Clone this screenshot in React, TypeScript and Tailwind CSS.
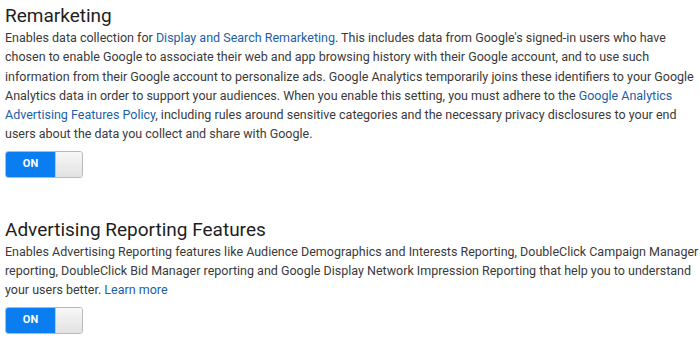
export default function App() {
  return (
    <div className="min-h-screen bg-white pl-[5px] pt-[3px] font-['Roboto',sans-serif] text-[#3a3a3a]">
      <Section
        title="Remarketing"
        body={
          <>
            Enables data collection for <A>Display and Search Remarketing</A>. This includes data from
            Google&apos;s signed-in users who have chosen to enable Google to associate their web and app
            browsing history with their Google account, and to use such information from their Google
            account to personalize ads. Google Analytics temporarily joins these identifiers to your Google
            Analytics data in order to support your audiences. When you enable this setting, you must adhere
            to the <A>Google Analytics Advertising Features Policy</A>, including rules around sensitive
            categories and the necessary privacy disclosures to your end users about the data you collect and
            share with Google.
          </>
        }
      />
      <div className="h-[39px]" />
      <Section
        title="Advertising Reporting Features"
        body={
          <>
            Enables Advertising Reporting features like Audience Demographics and Interests Reporting,
            DoubleClick Campaign Manager reporting, DoubleClick Bid Manager reporting and Google Display
            Network Impression Reporting that help you to understand your users better. <A>Learn more</A>
          </>
        }
      />
    </div>
  );
}

function A({ children }: { children: React.ReactNode }) {
  return (
    <a href="#" className="text-[#1a5fa6]">
      {children}
    </a>
  );
}

function Section({ title, body }: { title: string; body: React.ReactNode }) {
  return (
    <section>
      <h2 className="text-[19px] leading-[25px] text-[#1e1e1e]">{title}</h2>
      <p className="text-[12.5px] leading-[19.3px]">{body}</p>
      <Toggle />
    </section>
  );
}

function Toggle() {
  return (
    <div className="mt-[7px] flex h-[27px] w-[78px] overflow-hidden rounded-[3px] border border-[#b9b9b9]">
      <div className="flex w-[49px] items-center justify-center bg-[#0a7ef0] text-[11px] font-bold text-white">
        ON
      </div>
      <div className="flex-1 border-l border-[#c4c4c4] bg-gradient-to-b from-[#f7f7f7] to-[#e2e2e2]" />
    </div>
  );
}
